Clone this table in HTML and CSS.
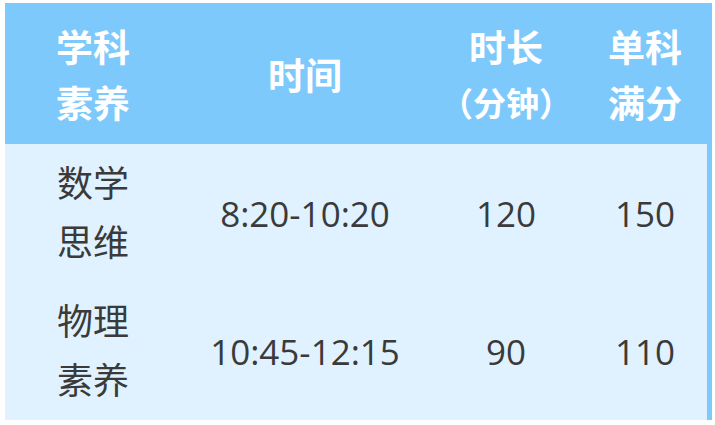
FILE: index.html
```html
<!DOCTYPE html>
<html lang="zh-CN">
<head>
<meta charset="utf-8">
<link rel="stylesheet" href="styles.css">
</head>
<body>
<div class="page">
  <div class="table">
    <div class="row head">
      <div class="cell"><span>学科</span><span>素养</span></div>
      <div class="cell"><span>时间</span></div>
      <div class="cell"><span>时长</span><span class="unit">（分钟）</span></div>
      <div class="cell"><span>单科</span><span>满分</span></div>
    </div>
    <div class="row body">
      <div class="cell"><span>数学</span><span>思维</span></div>
      <div class="cell num"><span>8:20-10:20</span></div>
      <div class="cell num"><span>120</span></div>
      <div class="cell num"><span>150</span></div>
    </div>
    <div class="row body">
      <div class="cell"><span>物理</span><span>素养</span></div>
      <div class="cell num"><span>10:45-12:15</span></div>
      <div class="cell num"><span>90</span></div>
      <div class="cell num"><span>110</span></div>
    </div>
  </div>
</div>
</body>
</html>
```

FILE: styles.css
```css
html, body {
  margin: 0;
  padding: 0;
  background: #ffffff;
}
.page {
  padding: 3px 0 0 5px;
}
.table {
  width: 702px;
  border-right: 5px solid #7ec9fc;
  background: #e0f2ff;
  font-family: "Open Sans", "Noto Sans CJK SC", sans-serif;
}
.row {
  display: grid;
  grid-template-columns: 176px 248px 154px 124px;
}
.head {
  height: 141px;
  background: #7ec9fc;
  color: #ffffff;
  font-weight: 700;
  font-size: 37px;
  line-height: 56px;
}
.body {
  height: 138px;
  color: #3a3a3a;
  font-size: 36px;
  line-height: 59px;
}
.cell {
  display: flex;
  flex-direction: column;
  align-items: center;
  justify-content: center;
  text-align: center;
}
.head .cell span {
  font-family: "Noto Sans CJK SC", sans-serif;
}
.head .cell .unit {
  font-size: 33px;
}
.num {
  font-size: 35px;
}
```
